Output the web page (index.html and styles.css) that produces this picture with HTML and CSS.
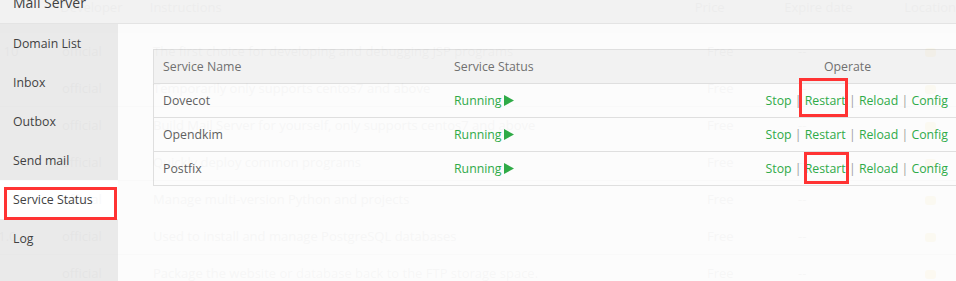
FILE: index.html
```html
<!DOCTYPE html>
<html lang="en">
<head>
    <meta charset="UTF-8">
    <meta name="viewport" content="width=device-width, initial-scale=1.0">
    <title>Mail Server - Service Status</title>
    <link rel="stylesheet" href="styles.css">
</head>
<body>
    <!-- Software list behind the popup -->
    <div class="bg-page">
        <div class="bg-head">
            <span class="bg-name">Name</span>
            <span class="bg-dev">Developer</span>
            <span class="bg-desc">Instructions</span>
            <span class="bg-price">Price</span>
            <span class="bg-date">Expire date</span>
            <span class="bg-loc">Location</span>
        </div>
        <div class="bg-row">
            <span class="bg-name">Tomcat 10</span>
            <span class="bg-dev">official</span>
            <span class="bg-desc">The first choice for developing and debugging JSP programs</span>
            <span class="bg-price">Free</span>
            <span class="bg-date">--</span>
            <span class="bg-loc"><i class="folder"></i></span>
        </div>
        <div class="bg-row line">
            <span class="bg-name"></span>
            <span class="bg-dev">official</span>
            <span class="bg-desc">Temporarily only supports centos7 and above</span>
            <span class="bg-price">Free</span>
            <span class="bg-date">--</span>
            <span class="bg-loc"><i class="folder"></i></span>
        </div>
        <div class="bg-row">
            <span class="bg-name"></span>
            <span class="bg-dev">official</span>
            <span class="bg-desc">Build Mail Server for yourself, only supports centos7 and above</span>
            <span class="bg-price">Free</span>
            <span class="bg-date">--</span>
            <span class="bg-loc"><i class="folder"></i></span>
        </div>
        <div class="bg-row line">
            <span class="bg-name"></span>
            <span class="bg-dev">official</span>
            <span class="bg-desc">Quickly deploy common programs</span>
            <span class="bg-price">Free</span>
            <span class="bg-date">--</span>
            <span class="bg-loc"><i class="folder"></i></span>
        </div>
        <div class="bg-row">
            <span class="bg-name"></span>
            <span class="bg-dev">official</span>
            <span class="bg-desc">Manage multi-version Python and projects</span>
            <span class="bg-price">Free</span>
            <span class="bg-date">--</span>
            <span class="bg-loc"><i class="folder"></i></span>
        </div>
        <div class="bg-row line">
            <span class="bg-name">Pgsql - 1.0</span>
            <span class="bg-dev">official</span>
            <span class="bg-desc">Used to install and manage PostgreSQL databases</span>
            <span class="bg-price">Free</span>
            <span class="bg-date">--</span>
            <span class="bg-loc"><i class="folder"></i></span>
        </div>
        <div class="bg-row">
            <span class="bg-name"></span>
            <span class="bg-dev">official</span>
            <span class="bg-desc">Package the website or database back to the FTP storage space.</span>
            <span class="bg-price">Free</span>
            <span class="bg-date">--</span>
            <span class="bg-loc"><i class="folder"></i></span>
        </div>
    </div>

    <!-- Mail Server popup -->
    <div class="layer">
        <div class="layer-title">Mail Server</div>
        <div class="layer-body">
            <ul class="menu">
                <li>Domain List</li>
                <li>Inbox</li>
                <li>Outbox</li>
                <li>Send mail</li>
                <li class="active">Service Status</li>
                <li>Log</li>
            </ul>
            <div class="main">
                <table class="service-table">
                    <thead>
                        <tr>
                            <th class="col-name">Service Name</th>
                            <th class="col-status">Service Status</th>
                            <th class="col-op">Operate</th>
                        </tr>
                    </thead>
                    <tbody>
                        <tr>
                            <td>Dovecot</td>
                            <td><span class="running">Running<svg width="10" height="11" viewBox="0 0 10 11"><polygon points="0,0 10,5.5 0,11"/></svg></span></td>
                            <td class="ops"><a>Stop</a> | <a>Restart</a> | <a>Reload</a> | <a>Config</a></td>
                        </tr>
                        <tr>
                            <td>Opendkim</td>
                            <td><span class="running">Running<svg width="10" height="11" viewBox="0 0 10 11"><polygon points="0,0 10,5.5 0,11"/></svg></span></td>
                            <td class="ops"><a>Stop</a> | <a>Restart</a> | <a>Reload</a> | <a>Config</a></td>
                        </tr>
                        <tr>
                            <td>Postfix</td>
                            <td><span class="running">Running<svg width="10" height="11" viewBox="0 0 10 11"><polygon points="0,0 10,5.5 0,11"/></svg></span></td>
                            <td class="ops"><a>Stop</a> | <a>Restart</a> | <a>Reload</a> | <a>Config</a></td>
                        </tr>
                    </tbody>
                </table>
            </div>
        </div>
    </div>

    <!-- red highlight marks -->
    <div class="mark mark-menu"></div>
    <div class="mark mark-restart1"></div>
    <div class="mark mark-restart3"></div>
</body>
</html>
```

FILE: styles.css
```css
body {
    margin: 0;
    padding: 0;
    width: 956px;
    height: 281px;
    overflow: hidden;
    position: relative;
    font-family: "Open Sans", "Noto Sans", sans-serif;
    font-size: 12.3px;
    color: #555;
    background-color: #fff;
}

/* page behind the popup */
.bg-page {
    margin-left: -45px;
    margin-top: -8px;
    color: #aaa;
    font-size: 13px;
}
.bg-head {
    display: flex;
    height: 41px;
    line-height: 30px;
    background-color: #f6f6f6;
}
.bg-row {
    display: flex;
    height: 37px;
    line-height: 37px;
}
.bg-row.line {
    border-bottom: 1px solid #ddd;
    height: 36px;
}
.bg-name {
    width: 107px;
    white-space: nowrap;
    overflow: hidden;
}
.bg-dev {
    width: 91px;
}
.bg-desc {
    width: 554px;
    white-space: nowrap;
}
.bg-price {
    width: 91px;
}
.bg-date {
    width: 122px;
}
.bg-loc {
    white-space: nowrap;
}
.folder {
    display: inline-block;
    width: 11px;
    height: 9px;
    margin-left: 5px;
    background-color: #f7d36b;
    border-radius: 3px;
    vertical-align: middle;
}

/* popup */
.layer {
    position: absolute;
    top: -19px;
    left: 0;
    width: 960px;
    opacity: 0.93;
}
.layer-title {
    height: 41px;
    padding-top: 1px;
    line-height: 42px;
    padding-left: 13px;
    font-size: 14px;
    color: #333;
    background-color: #f2f2f2;
    border-bottom: 1px solid #e3e3e3;
    overflow: hidden;
}
.layer-body {
    display: flex;
    height: 300px;
}
.menu {
    list-style: none;
    margin: 0;
    padding: 0;
    width: 118px;
    background-color: #e9e9e9;
}
.menu li {
    height: 39px;
    line-height: 39px;
    padding-left: 13px;
    color: #333;
}
.menu li.active {
    background-color: #fff;
}
.main {
    flex: 1;
    background-color: #fcfcfc;
    padding: 25px 0 0 35px;
}
.service-table {
    width: 804px;
    border-collapse: collapse;
    border: 1px solid #ddd;
}
.service-table th,
.service-table td {
    height: 33px;
    padding: 0 9px;
    border-top: 1px solid #ddd;
    text-align: left;
    font-weight: normal;
    white-space: nowrap;
}
.service-table th {
    background-color: #f2f2f2;
    color: #666;
}
.col-name {
    width: 273px;
}
.col-status {
    width: 276px;
}
.service-table th.col-op {
    text-align: center;
}
.service-table td.ops {
    text-align: right;
    padding-right: 8px;
    color: #999;
}
.ops a {
    color: #20a53a;
}
.running {
    color: #20a53a;
}
.running svg {
    fill: #20a53a;
    margin-left: 2px;
    vertical-align: -1px;
}

/* red highlight marks */
.mark {
    position: absolute;
    border: 3px solid #f33;
}
.mark-menu {
    left: 4px;
    top: 187px;
    width: 107px;
    height: 27px;
}
.mark-restart1 {
    left: 799px;
    top: 78px;
    width: 43px;
    height: 33px;
}
.mark-restart3 {
    left: 804px;
    top: 152px;
    width: 39px;
    height: 26px;
}
```
